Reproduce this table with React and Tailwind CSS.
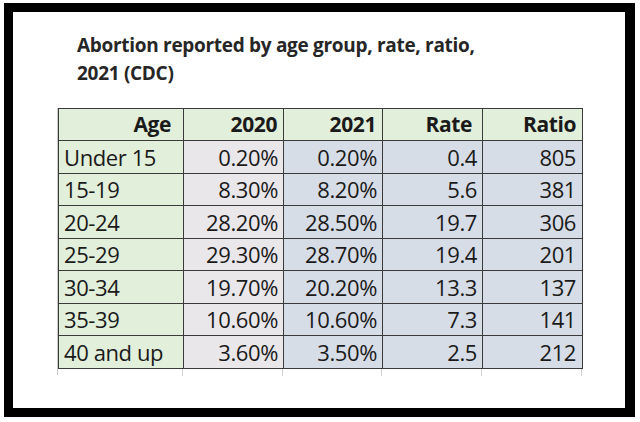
import React from "react";

const rows = [
  ["Under 15", "0.20%", "0.20%", "0.4", "805"],
  ["15-19", "8.30%", "8.20%", "5.6", "381"],
  ["20-24", "28.20%", "28.50%", "19.7", "306"],
  ["25-29", "29.30%", "28.70%", "19.4", "201"],
  ["30-34", "19.70%", "20.20%", "13.3", "137"],
  ["35-39", "10.60%", "10.60%", "7.3", "141"],
  ["40 and up", "3.60%", "3.50%", "2.5", "212"],
];

const font = { fontFamily: '"Open Sans", "Liberation Sans", sans-serif' };

export default function App() {
  return (
    <div className="w-[640px] h-[422px] bg-white pt-[3px] pl-[4px]" style={font}>
      <div className="w-[631px] h-[414px] border-[9px] border-r-[10px] border-black bg-white">
        <h1 className="pl-[64px] pt-[19px] text-[19px] leading-[28px] font-bold text-[#262626] tracking-[-0.3px]">
          Abortion reported by age group, rate, ratio,
          <br />
          2021 (CDC)
        </h1>
        <div className="ml-[42px] mt-[21px] flex">
          <div className="w-[3px] border-r border-[#c8c8c8] h-[267px]" />
          <div>
            <table className="border-collapse text-[#1a1a1a] text-[22px] tracking-[-0.4px]">
              <thead>
                <tr className="h-[32px] bg-[#e2efda] text-[21px] leading-none">
                  <th className="w-[125px] border border-[#3a3a3a] text-right pr-[12px] font-bold">Age</th>
                  <th className="w-[100px] border border-[#3a3a3a] text-right pr-[6px] font-bold">2020</th>
                  <th className="w-[99px] border border-[#3a3a3a] text-right pr-[6px] font-bold">2021</th>
                  <th className="w-[100px] border border-[#3a3a3a] text-right pr-[10px] font-bold">Rate</th>
                  <th className="w-[100px] border border-[#3a3a3a] text-right pr-[6px] font-bold">Ratio</th>
                </tr>
              </thead>
              <tbody>
                {rows.map((r) => (
                  <tr key={r[0]} className="h-[32.5px]">
                    <td className="border border-[#3a3a3a] bg-[#e2efda] text-left pl-[5px] leading-none">{r[0]}</td>
                    <td className="border border-[#3a3a3a] bg-[#e9e7ea] text-right pr-[5px] leading-none">{r[1]}</td>
                    <td className="border border-[#3a3a3a] bg-[#d7dde6] text-right pr-[5px] leading-none">{r[2]}</td>
                    <td className="border border-[#3a3a3a] bg-[#d7dde6] text-right pr-[5px] leading-none">{r[3]}</td>
                    <td className="border border-[#3a3a3a] bg-[#d7dde6] text-right pr-[6px] leading-none">{r[4]}</td>
                  </tr>
                ))}
              </tbody>
            </table>
            <div className="flex h-[7px]">
              <div className="w-[125px] border-r border-[#d0d0d0]" />
              <div className="w-[100px] border-r border-[#d0d0d0]" />
              <div className="w-[99px] border-r border-[#d0d0d0]" />
              <div className="w-[100px] border-r border-[#d0d0d0]" />
              <div className="w-[100px] border-r border-[#d0d0d0]" />
            </div>
          </div>
        </div>
      </div>
    </div>
  );
}
